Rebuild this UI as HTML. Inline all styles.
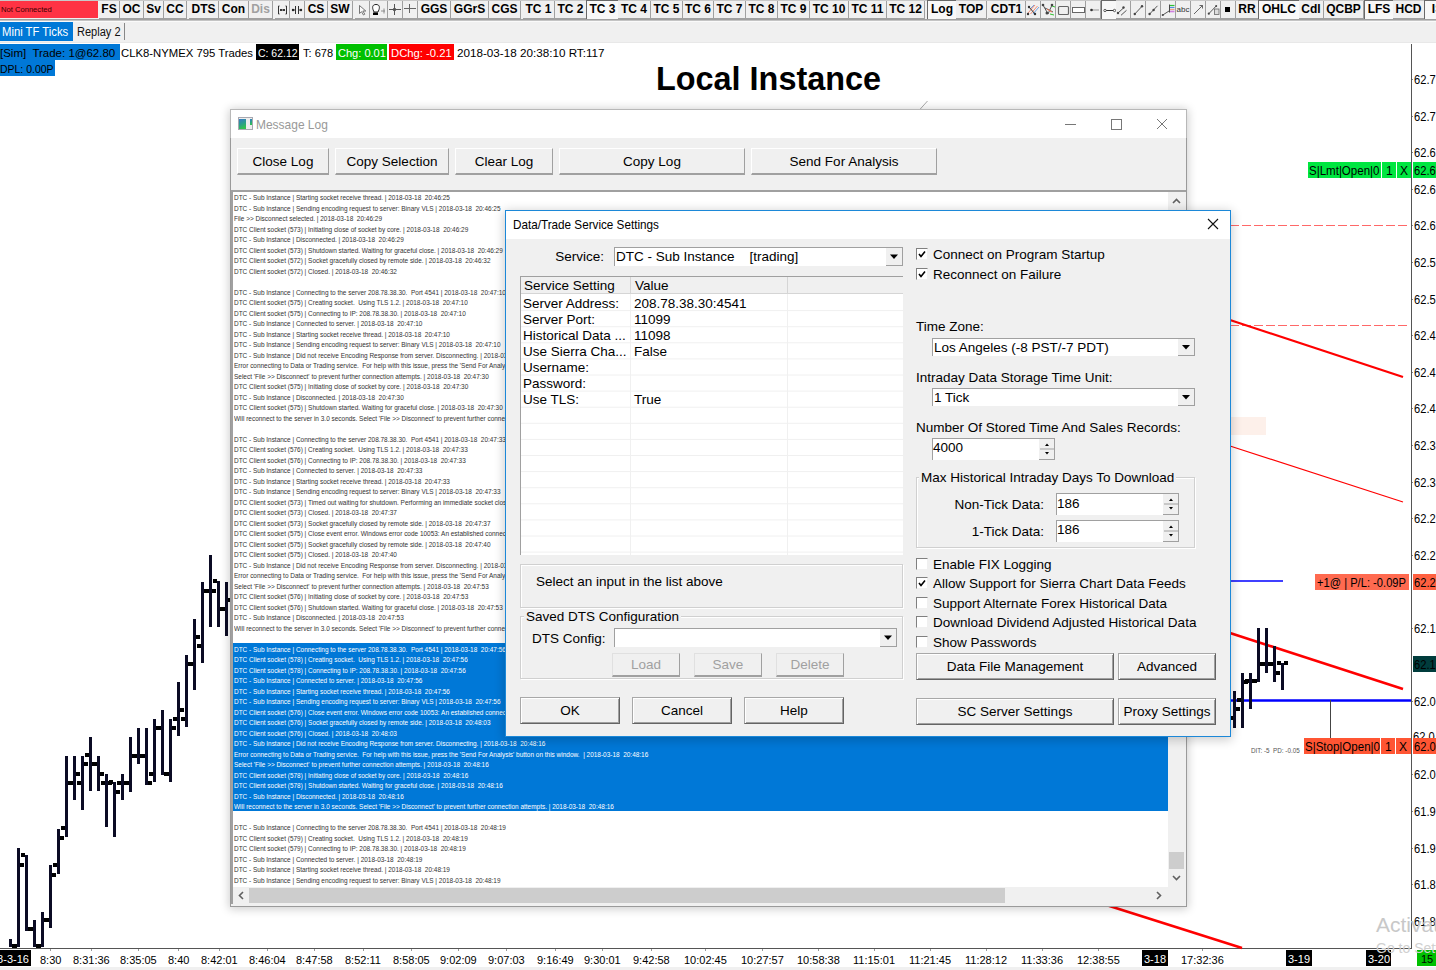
<!DOCTYPE html><html><head><meta charset="utf-8"><style>
*{box-sizing:border-box}
html,body{margin:0;padding:0;width:1436px;height:970px;overflow:hidden;background:#fff;font-family:'Liberation Sans', sans-serif;position:relative}
.a{position:absolute}
.t{position:absolute;white-space:nowrap;line-height:1}
.tb{position:absolute;top:1px;height:18px;background:#f0f0f0;border-right:1px solid #a0a0a0;border-bottom:1px solid #a0a0a0;font:bold 12px 'Liberation Sans', sans-serif;color:#000;text-align:center;line-height:17px;white-space:nowrap}
.tbp{background:#f8f8f8;border-right:none;border-bottom:none;border-left:1px solid #696969;border-top:1px solid #696969;top:0;height:19px}
.btn{position:absolute;background:#f0f0f0;border:1px solid #fff;border-right:1px solid #a0a0a0;border-bottom:2px solid #a0a0a0;font:13px 'Liberation Sans', sans-serif;color:#000;text-align:center;white-space:nowrap}
.log{position:absolute;left:234px;white-space:nowrap;font:7.5px 'Liberation Sans', sans-serif;color:#333;transform-origin:0 0;transform:scaleX(0.86);line-height:10.5px}
</style></head><body>

<div class="a" style="left:0;top:0;width:1436px;height:42px;background:#f0f0f0"></div>
<div class="a" style="left:0;top:19px;width:1436px;height:1px;background:#a0a0a0"></div>
<div class="a" style="left:0;top:20px;width:1436px;height:1px;background:#c4c4c4"></div>
<div class="a" style="left:0;top:21px;width:1436px;height:1px;background:#fafafa"></div>
<div class="a" style="left:0;top:0;width:1436px;height:1px;background:#c8c8c8"></div>
<div class="a" style="left:0;top:1px;width:98px;height:17px;background:#ff3344"></div>
<div class="t" style="left:1px;top:5px;font:8px 'Liberation Sans', sans-serif;color:#3a0000;transform:scaleX(0.95);transform-origin:0 0">Not Connected</div>
<div class="tb" style="left:99px;width:21px">FS</div>
<div class="tb" style="left:120px;width:24px">OC</div>
<div class="tb" style="left:144px;width:20px">Sv</div>
<div class="tb" style="left:164px;width:23px">CC</div>
<div class="tb" style="left:189px;width:30px">DTS</div>
<div class="tb" style="left:219px;width:30px">Con</div>
<div class="tb" style="left:249px;width:24px;color:#a0a0a0">Dis</div>
<div class="tb" style="left:275px;width:15px"><svg width="15" height="17" viewBox="0 0 15 17" style="position:absolute;left:0;top:0"><path d="M3.5 5v8M3.5 5h1M3.5 13h1M11.5 5v8M11.5 5h-1M11.5 13h-1M5 9h5" stroke="#333" stroke-width="1" fill="none"/><circle cx="6" cy="9" r="1.1" fill="#222"/><circle cx="9" cy="9" r="1.1" fill="#222"/></svg></div>
<div class="tb" style="left:290px;width:15px"><svg width="15" height="17" viewBox="0 0 15 17" style="position:absolute;left:0;top:0"><path d="M5.5 5v8M8.5 5v8M4 9h1M9 9h1" stroke="#333" stroke-width="1"/><circle cx="3" cy="9" r="1.2" fill="#222"/><circle cx="11" cy="9" r="1.2" fill="#222"/></svg></div>
<div class="tb" style="left:305px;width:23px">CS</div>
<div class="tb" style="left:328px;width:25px">SW</div>
<div class="tb" style="left:355px;width:15px"><svg width="15" height="17" viewBox="0 0 15 17" style="position:absolute;left:0;top:0"><path d="M4.5 4.5v8l2-1.8 2 3.3 1.3-0.8-2-3.2h3z" fill="#fafafa" stroke="#555" stroke-width="0.8" stroke-linejoin="round"/></svg></div>
<div class="tb" style="left:370px;width:18px"><svg width="15" height="17" viewBox="0 0 15 17" style="position:absolute;left:0;top:0"><path d="M3 8.5c-1-3 0-5 3-5s4 2 3 5l-1 2.5h-4z" fill="#fff" stroke="#222" stroke-width="1"/><rect x="3" y="11.5" width="5" height="2.5" fill="#000"/><path d="M11 10h6M14 7.5v5" stroke="#777" stroke-width="0.8"/></svg></div>
<div class="tb" style="left:388px;width:15px"><svg width="15" height="17" viewBox="0 0 15 17" style="position:absolute;left:0;top:0"><path d="M1 8.5H13M6.5 3V14" stroke="#555" stroke-width="1"/><circle cx="6.5" cy="8.5" r="1.7" fill="#555"/></svg></div>
<div class="tb" style="left:403px;width:15px"><svg width="15" height="17" viewBox="0 0 15 17" style="position:absolute;left:0;top:0"><path d="M1 7.5H13M6.5 3V12" stroke="#666" stroke-width="1"/></svg></div>
<div class="tb" style="left:418px;width:33px">GGS</div>
<div class="tb" style="left:451px;width:38px">GGrS</div>
<div class="tb" style="left:489px;width:32px">CGS</div>
<div class="tb" style="left:523px;width:32px">TC 1</div>
<div class="tb" style="left:555px;width:32px">TC 2</div>
<div class="tb tbp" style="left:586px;width:32px;line-height:17px">TC 3</div>
<div class="tb" style="left:618px;width:33px">TC 4</div>
<div class="tb" style="left:651px;width:32px">TC 5</div>
<div class="tb" style="left:683px;width:31px">TC 6</div>
<div class="tb" style="left:714px;width:32px">TC 7</div>
<div class="tb" style="left:746px;width:32px">TC 8</div>
<div class="tb" style="left:778px;width:32px">TC 9</div>
<div class="tb" style="left:810px;width:39px">TC 10</div>
<div class="tb" style="left:849px;width:38px">TC 11</div>
<div class="tb" style="left:887px;width:38px">TC 12</div>
<div class="tb tbp" style="left:927px;width:29px;line-height:17px">Log</div>
<div class="tb" style="left:956px;width:31px">TOP</div>
<div class="tb" style="left:988px;width:38px">CDT1</div>
<div class="tb" style="left:1026px;width:15px"><svg width="15" height="17" viewBox="0 0 15 17" style="position:absolute;left:0;top:0"><path d="M4.5 13l7-8M2 12l7-8" stroke="#f07050" stroke-width="0.8"/><path d="M7 13l6-7M5 7l3-3" stroke="#5090e0" stroke-width="0.8"/><path d="M3 6l6 7" stroke="#333" stroke-width="1"/><circle cx="3" cy="6" r="1.2" fill="#333"/><circle cx="9" cy="13" r="1.2" fill="#333"/><circle cx="2" cy="13" r="1.2" fill="#333"/></svg></div>
<div class="tb" style="left:1041px;width:15px"><svg width="15" height="17" viewBox="0 0 15 17" style="position:absolute;left:0;top:0"><path d="M2 4l5 9M11 4l-4 9M4 7l8 4" stroke="#444" stroke-width="0.9"/><path d="M6 8l5 3" stroke="#f07050"/><path d="M9 13l4 1M11 5l3 1" stroke="#30c030"/><circle cx="2" cy="4" r="1.3" fill="#444"/><circle cx="11" cy="4" r="1.3" fill="#444"/><circle cx="6" cy="12" r="1.5" fill="#444"/></svg></div>
<div class="tb" style="left:1056px;width:15px"><svg width="15" height="17" viewBox="0 0 15 17" style="position:absolute;left:0;top:0"><rect x="2.5" y="5.5" width="10" height="8" rx="1" fill="none" stroke="#666" stroke-width="1.2"/></svg></div>
<div class="tb" style="left:1071px;width:15px"><svg width="15" height="17" viewBox="0 0 15 17" style="position:absolute;left:0;top:0"><rect x="1.5" y="6.5" width="12" height="5" fill="#fff" stroke="#666" stroke-width="1"/></svg></div>
<div class="tb" style="left:1086px;width:15px"><svg width="15" height="17" viewBox="0 0 15 17" style="position:absolute;left:0;top:0"><path d="M6 9h7" stroke="#aaa" stroke-width="1.3"/><circle cx="5.5" cy="9" r="1.3" fill="#333"/></svg></div>
<div class="tb tbp" style="left:1101px;width:15px"><svg width="15" height="17" viewBox="0 0 15 17" style="position:absolute;left:0;top:0"><path d="M3 9.5h9.5" stroke="#333" stroke-width="1"/><circle cx="3" cy="9.5" r="1.2" fill="#fff" stroke="#333" stroke-width="0.8"/><circle cx="12.5" cy="9.5" r="1.2" fill="#fff" stroke="#333" stroke-width="0.8"/></svg></div>
<div class="tb" style="left:1116px;width:15px"><svg width="15" height="17" viewBox="0 0 15 17" style="position:absolute;left:0;top:0"><path d="M2 12l6-5.5M5 14.3l5.5-5" stroke="#444" stroke-width="0.9"/><circle cx="2" cy="12" r="1.2" fill="#444"/><circle cx="7.5" cy="6.5" r="1.2" fill="#444"/></svg></div>
<div class="tb" style="left:1131px;width:15px"><svg width="15" height="17" viewBox="0 0 15 17" style="position:absolute;left:0;top:0"><path d="M3.8 13L11 5.3" stroke="#444" stroke-width="0.9"/><circle cx="3.8" cy="13" r="1.2" fill="#444"/><circle cx="11" cy="5.3" r="1.2" fill="#444"/></svg></div>
<div class="tb" style="left:1146px;width:15px"><svg width="15" height="17" viewBox="0 0 15 17" style="position:absolute;left:0;top:0"><path d="M3.6 13L11.5 4.8" stroke="#444" stroke-width="0.9"/><circle cx="3.6" cy="13" r="1.2" fill="#444"/><circle cx="7.6" cy="9" r="1.2" fill="#444"/></svg></div>
<div class="tb" style="left:1161px;width:15px"><svg width="15" height="17" viewBox="0 0 15 17" style="position:absolute;left:0;top:0"><path d="M1.8 14L8 10" stroke="#444" stroke-width="0.9"/><circle cx="1.8" cy="14" r="1.1" fill="#444"/><path d="M9 4.5h4.5" stroke="#30c030" stroke-width="1.2"/><path d="M9 6.5h4.5" stroke="#5090e0" stroke-width="1.2"/><path d="M9 8.5h4.5" stroke="#f0a080" stroke-width="1.2"/><path d="M9 10.5h4.5" stroke="#d080e0" stroke-width="1.6"/><path d="M8.5 3.5v8" stroke="#333" stroke-width="0.9"/></svg></div>
<div class="tb" style="left:1176px;width:15px;font:8px 'Liberation Sans', sans-serif;color:#333;line-height:17px">abc</div>
<div class="tb" style="left:1191px;width:15px"><svg width="15" height="17" viewBox="0 0 15 17" style="position:absolute;left:0;top:0"><path d="M3 13l8.5-8.5M8.5 4.5h3v3" stroke="#555" stroke-width="0.9" fill="none"/></svg></div>
<div class="tb" style="left:1206px;width:15px"><svg width="15" height="17" viewBox="0 0 15 17" style="position:absolute;left:0;top:0"><path d="M2.8 12.7L10.2 5" stroke="#444" stroke-width="0.9"/><circle cx="2.8" cy="12.7" r="1.1" fill="#444"/><circle cx="10.2" cy="5" r="1" fill="#444"/><rect x="8.5" y="8" width="4.5" height="5.5" fill="#ddd" stroke="#666" stroke-width="0.8"/></svg></div>
<div class="tb" style="left:1221px;width:15px"><div class="a" style="left:4px;top:6px;width:5px;height:5px;background:#000"></div></div>
<div class="tb" style="left:1236px;width:23px">RR</div>
<div class="tb tbp" style="left:1258px;width:41px;line-height:17px">OHLC</div>
<div class="tb" style="left:1299px;width:25px">Cdl</div>
<div class="tb" style="left:1324px;width:40px">QCBP</div>
<div class="tb tbp" style="left:1364px;width:29px;line-height:17px">LFS</div>
<div class="tb" style="left:1393px;width:32px">HCD</div>
<div class="tb tbp" style="left:1424px;width:26px;line-height:17px">IS</div>
<div class="a" style="left:0;top:22px;width:73px;height:19px;background:#0078d7"></div>
<div class="t" style="left:1.5px;top:25px;font:12px 'Liberation Sans', sans-serif;color:#fff;transform:scaleX(0.94);transform-origin:0 0">Mini TF Ticks</div>
<div class="t" style="left:77px;top:25px;font:12px 'Liberation Sans', sans-serif;color:#111;transform:scaleX(0.92);transform-origin:0 0">Replay 2</div>
<div class="a" style="left:124px;top:23px;width:1px;height:17px;background:#888"></div>
<div class="a" style="left:0;top:42px;width:1436px;height:1px;background:#e8e8e8"></div>
<div class="a" style="left:0;top:44px;width:120px;height:16px;background:#0078d7"></div>
<div class="a" style="left:256px;top:44px;width:43px;height:16px;background:#000"></div>
<div class="a" style="left:336px;top:44px;width:51px;height:16px;background:#00c000"></div>
<div class="a" style="left:389px;top:44px;width:65px;height:16px;background:#ff0000"></div>
<div class="a" style="left:0;top:60px;width:55px;height:16px;background:#0078d7"></div>
<div class="t" style="left:0px;top:47px;font:11.5px 'Liberation Sans', sans-serif;color:#000;transform:scaleX(1.0);transform-origin:0 0;white-space:pre">[Sim]  Trade: 1@62.80</div>
<div class="t" style="left:120.5px;top:47px;font:11.5px 'Liberation Sans', sans-serif;color:#000;transform:scaleX(0.983);transform-origin:0 0;white-space:pre">CLK8-NYMEX 795 Trades</div>
<div class="t" style="left:257.5px;top:47px;font:11.5px 'Liberation Sans', sans-serif;color:#fff;transform:scaleX(0.91);transform-origin:0 0;white-space:pre">C: 62.12</div>
<div class="t" style="left:302.8px;top:47px;font:11.5px 'Liberation Sans', sans-serif;color:#000;transform:scaleX(0.96);transform-origin:0 0;white-space:pre">T: 678</div>
<div class="t" style="left:338px;top:47px;font:11.5px 'Liberation Sans', sans-serif;color:#fff;transform:scaleX(0.96);transform-origin:0 0;white-space:pre">Chg: 0.01</div>
<div class="t" style="left:391px;top:47px;font:11.5px 'Liberation Sans', sans-serif;color:#fff;transform:scaleX(0.98);transform-origin:0 0;white-space:pre">DChg: -0.21</div>
<div class="t" style="left:457px;top:47px;font:11.5px 'Liberation Sans', sans-serif;color:#000;transform:scaleX(1.015);transform-origin:0 0;white-space:pre">2018-03-18 20:38:10 RT:117</div>
<div class="t" style="left:0;top:62.5px;font:11.5px 'Liberation Sans', sans-serif;color:#000;transform:scaleX(0.91);transform-origin:0 0;white-space:pre">DPL: 0.00P</div>
<div class="t" style="left:656px;top:61px;font:bold 32.4px 'Liberation Sans', sans-serif;color:#000">Local Instance</div>
<div class="a" style="left:1411px;top:44px;width:1px;height:905px;background:#555"></div>
<div class="t" style="left:1414px;top:73px;font:12px 'Liberation Sans', sans-serif;color:#000;transform:scaleX(0.93);transform-origin:0 0">62.7</div>
<div class="a" style="left:1412px;top:79px;width:1px;height:1px;background:#888"></div>
<div class="t" style="left:1414px;top:110px;font:12px 'Liberation Sans', sans-serif;color:#000;transform:scaleX(0.93);transform-origin:0 0">62.7</div>
<div class="a" style="left:1412px;top:116px;width:1px;height:1px;background:#888"></div>
<div class="t" style="left:1414px;top:146px;font:12px 'Liberation Sans', sans-serif;color:#000;transform:scaleX(0.93);transform-origin:0 0">62.6</div>
<div class="a" style="left:1412px;top:152px;width:1px;height:1px;background:#888"></div>
<div class="t" style="left:1414px;top:183px;font:12px 'Liberation Sans', sans-serif;color:#000;transform:scaleX(0.93);transform-origin:0 0">62.6</div>
<div class="a" style="left:1412px;top:189px;width:1px;height:1px;background:#888"></div>
<div class="t" style="left:1414px;top:219px;font:12px 'Liberation Sans', sans-serif;color:#000;transform:scaleX(0.93);transform-origin:0 0">62.6</div>
<div class="a" style="left:1412px;top:225px;width:1px;height:1px;background:#888"></div>
<div class="t" style="left:1414px;top:256px;font:12px 'Liberation Sans', sans-serif;color:#000;transform:scaleX(0.93);transform-origin:0 0">62.5</div>
<div class="a" style="left:1412px;top:262px;width:1px;height:1px;background:#888"></div>
<div class="t" style="left:1414px;top:293px;font:12px 'Liberation Sans', sans-serif;color:#000;transform:scaleX(0.93);transform-origin:0 0">62.5</div>
<div class="a" style="left:1412px;top:299px;width:1px;height:1px;background:#888"></div>
<div class="t" style="left:1414px;top:329px;font:12px 'Liberation Sans', sans-serif;color:#000;transform:scaleX(0.93);transform-origin:0 0">62.4</div>
<div class="a" style="left:1412px;top:335px;width:1px;height:1px;background:#888"></div>
<div class="t" style="left:1414px;top:366px;font:12px 'Liberation Sans', sans-serif;color:#000;transform:scaleX(0.93);transform-origin:0 0">62.4</div>
<div class="a" style="left:1412px;top:372px;width:1px;height:1px;background:#888"></div>
<div class="t" style="left:1414px;top:402px;font:12px 'Liberation Sans', sans-serif;color:#000;transform:scaleX(0.93);transform-origin:0 0">62.4</div>
<div class="a" style="left:1412px;top:408px;width:1px;height:1px;background:#888"></div>
<div class="t" style="left:1414px;top:439px;font:12px 'Liberation Sans', sans-serif;color:#000;transform:scaleX(0.93);transform-origin:0 0">62.3</div>
<div class="a" style="left:1412px;top:445px;width:1px;height:1px;background:#888"></div>
<div class="t" style="left:1414px;top:476px;font:12px 'Liberation Sans', sans-serif;color:#000;transform:scaleX(0.93);transform-origin:0 0">62.3</div>
<div class="a" style="left:1412px;top:482px;width:1px;height:1px;background:#888"></div>
<div class="t" style="left:1414px;top:512px;font:12px 'Liberation Sans', sans-serif;color:#000;transform:scaleX(0.93);transform-origin:0 0">62.2</div>
<div class="a" style="left:1412px;top:518px;width:1px;height:1px;background:#888"></div>
<div class="t" style="left:1414px;top:549px;font:12px 'Liberation Sans', sans-serif;color:#000;transform:scaleX(0.93);transform-origin:0 0">62.2</div>
<div class="a" style="left:1412px;top:555px;width:1px;height:1px;background:#888"></div>
<div class="t" style="left:1414px;top:622px;font:12px 'Liberation Sans', sans-serif;color:#000;transform:scaleX(0.93);transform-origin:0 0">62.1</div>
<div class="a" style="left:1412px;top:628px;width:1px;height:1px;background:#888"></div>
<div class="t" style="left:1414px;top:695px;font:12px 'Liberation Sans', sans-serif;color:#000;transform:scaleX(0.93);transform-origin:0 0">62.0</div>
<div class="a" style="left:1412px;top:701px;width:1px;height:1px;background:#888"></div>
<div class="t" style="left:1414px;top:768px;font:12px 'Liberation Sans', sans-serif;color:#000;transform:scaleX(0.93);transform-origin:0 0">62.0</div>
<div class="a" style="left:1412px;top:774px;width:1px;height:1px;background:#888"></div>
<div class="t" style="left:1414px;top:805px;font:12px 'Liberation Sans', sans-serif;color:#000;transform:scaleX(0.93);transform-origin:0 0">61.9</div>
<div class="a" style="left:1412px;top:811px;width:1px;height:1px;background:#888"></div>
<div class="t" style="left:1414px;top:842px;font:12px 'Liberation Sans', sans-serif;color:#000;transform:scaleX(0.93);transform-origin:0 0">61.9</div>
<div class="a" style="left:1412px;top:848px;width:1px;height:1px;background:#888"></div>
<div class="t" style="left:1414px;top:878px;font:12px 'Liberation Sans', sans-serif;color:#000;transform:scaleX(0.93);transform-origin:0 0">61.8</div>
<div class="a" style="left:1412px;top:884px;width:1px;height:1px;background:#888"></div>
<div class="t" style="left:1414px;top:915px;font:12px 'Liberation Sans', sans-serif;color:#000;transform:scaleX(0.93);transform-origin:0 0">61.8</div>
<div class="a" style="left:1412px;top:921px;width:1px;height:1px;background:#888"></div>
<div class="t" style="left:1413px;top:730px;font:12px 'Liberation Sans', sans-serif;color:#000;transform:scaleX(0.93);transform-origin:0 0">62.0</div>
<div class="a" style="left:1413px;top:162px;width:30px;height:16px;background:#00e640;overflow:hidden"><div class="t" style="left:1px;top:2px;font:12px 'Liberation Sans', sans-serif;color:#000;transform:scaleX(0.93);transform-origin:0 0;">62.6</div></div>
<div class="a" style="left:1413px;top:574px;width:30px;height:16px;background:#ff6040;overflow:hidden"><div class="t" style="left:1px;top:2px;font:12px 'Liberation Sans', sans-serif;color:#000;transform:scaleX(0.93);transform-origin:0 0;">62.2</div></div>
<div class="a" style="left:1413px;top:656px;width:30px;height:16px;background:#003c3c;overflow:hidden"><div class="t" style="left:1px;top:2px;font:12px 'Liberation Sans', sans-serif;color:#000;transform:scaleX(0.93);transform-origin:0 0;">62.1</div></div>
<div class="a" style="left:1413px;top:738px;width:30px;height:16px;background:#ff5533;overflow:hidden"><div class="t" style="left:1px;top:2px;font:12px 'Liberation Sans', sans-serif;color:#000;transform:scaleX(0.93);transform-origin:0 0;">62.0</div></div>
<div class="a" style="left:0;top:948px;width:1412px;height:1px;background:#555"></div>
<div class="a" style="left:0;top:967px;width:1436px;height:3px;background:#f0f0f0"></div>
<div class="t" style="left:40px;top:954px;font:11px 'Liberation Sans', sans-serif;color:#000">8:30</div>
<div class="a" style="left:50px;top:949px;width:1px;height:2px;background:#999"></div>
<div class="t" style="left:73px;top:954px;font:11px 'Liberation Sans', sans-serif;color:#000">8:31:36</div>
<div class="a" style="left:91px;top:949px;width:1px;height:2px;background:#999"></div>
<div class="t" style="left:120px;top:954px;font:11px 'Liberation Sans', sans-serif;color:#000">8:35:05</div>
<div class="a" style="left:138px;top:949px;width:1px;height:2px;background:#999"></div>
<div class="t" style="left:168px;top:954px;font:11px 'Liberation Sans', sans-serif;color:#000">8:40</div>
<div class="a" style="left:178px;top:949px;width:1px;height:2px;background:#999"></div>
<div class="t" style="left:201px;top:954px;font:11px 'Liberation Sans', sans-serif;color:#000">8:42:01</div>
<div class="a" style="left:219px;top:949px;width:1px;height:2px;background:#999"></div>
<div class="t" style="left:249px;top:954px;font:11px 'Liberation Sans', sans-serif;color:#000">8:46:04</div>
<div class="a" style="left:267px;top:949px;width:1px;height:2px;background:#999"></div>
<div class="t" style="left:296px;top:954px;font:11px 'Liberation Sans', sans-serif;color:#000">8:47:58</div>
<div class="a" style="left:314px;top:949px;width:1px;height:2px;background:#999"></div>
<div class="t" style="left:345px;top:954px;font:11px 'Liberation Sans', sans-serif;color:#000">8:52:11</div>
<div class="a" style="left:363px;top:949px;width:1px;height:2px;background:#999"></div>
<div class="t" style="left:393px;top:954px;font:11px 'Liberation Sans', sans-serif;color:#000">8:58:05</div>
<div class="a" style="left:411px;top:949px;width:1px;height:2px;background:#999"></div>
<div class="t" style="left:440px;top:954px;font:11px 'Liberation Sans', sans-serif;color:#000">9:02:09</div>
<div class="a" style="left:458px;top:949px;width:1px;height:2px;background:#999"></div>
<div class="t" style="left:488px;top:954px;font:11px 'Liberation Sans', sans-serif;color:#000">9:07:03</div>
<div class="a" style="left:506px;top:949px;width:1px;height:2px;background:#999"></div>
<div class="t" style="left:537px;top:954px;font:11px 'Liberation Sans', sans-serif;color:#000">9:16:49</div>
<div class="a" style="left:555px;top:949px;width:1px;height:2px;background:#999"></div>
<div class="t" style="left:584px;top:954px;font:11px 'Liberation Sans', sans-serif;color:#000">9:30:01</div>
<div class="a" style="left:602px;top:949px;width:1px;height:2px;background:#999"></div>
<div class="t" style="left:633px;top:954px;font:11px 'Liberation Sans', sans-serif;color:#000">9:42:58</div>
<div class="a" style="left:651px;top:949px;width:1px;height:2px;background:#999"></div>
<div class="t" style="left:684px;top:954px;font:11px 'Liberation Sans', sans-serif;color:#000">10:02:45</div>
<div class="a" style="left:705px;top:949px;width:1px;height:2px;background:#999"></div>
<div class="t" style="left:741px;top:954px;font:11px 'Liberation Sans', sans-serif;color:#000">10:27:57</div>
<div class="a" style="left:762px;top:949px;width:1px;height:2px;background:#999"></div>
<div class="t" style="left:797px;top:954px;font:11px 'Liberation Sans', sans-serif;color:#000">10:58:38</div>
<div class="a" style="left:818px;top:949px;width:1px;height:2px;background:#999"></div>
<div class="t" style="left:853px;top:954px;font:11px 'Liberation Sans', sans-serif;color:#000">11:15:01</div>
<div class="a" style="left:874px;top:949px;width:1px;height:2px;background:#999"></div>
<div class="t" style="left:909px;top:954px;font:11px 'Liberation Sans', sans-serif;color:#000">11:21:45</div>
<div class="a" style="left:930px;top:949px;width:1px;height:2px;background:#999"></div>
<div class="t" style="left:965px;top:954px;font:11px 'Liberation Sans', sans-serif;color:#000">11:28:12</div>
<div class="a" style="left:986px;top:949px;width:1px;height:2px;background:#999"></div>
<div class="t" style="left:1021px;top:954px;font:11px 'Liberation Sans', sans-serif;color:#000">11:33:36</div>
<div class="a" style="left:1042px;top:949px;width:1px;height:2px;background:#999"></div>
<div class="t" style="left:1077px;top:954px;font:11px 'Liberation Sans', sans-serif;color:#000">12:38:55</div>
<div class="a" style="left:1098px;top:949px;width:1px;height:2px;background:#999"></div>
<div class="t" style="left:1181px;top:954px;font:11px 'Liberation Sans', sans-serif;color:#000">17:32:36</div>
<div class="a" style="left:1202px;top:949px;width:1px;height:2px;background:#999"></div>
<div class="a" style="left:0px;top:950px;width:31px;height:16px;background:#000;overflow:hidden"><div class="t" style="left:-9px;top:3px;font:11px 'Liberation Sans', sans-serif;color:#fff;">18-3-16</div></div>
<div class="a" style="left:1142px;top:950px;width:26px;height:16px;background:#000;overflow:hidden"><div class="t" style="left:2px;top:3px;font:11px 'Liberation Sans', sans-serif;color:#fff;">3-18</div></div>
<div class="a" style="left:1286px;top:950px;width:26px;height:16px;background:#000;overflow:hidden"><div class="t" style="left:2px;top:3px;font:11px 'Liberation Sans', sans-serif;color:#fff;">3-19</div></div>
<div class="a" style="left:1366px;top:950px;width:25px;height:16px;background:#000;overflow:hidden"><div class="t" style="left:2px;top:3px;font:11px 'Liberation Sans', sans-serif;color:#fff;">3-20</div></div>
<div class="a" style="left:1417px;top:950px;width:19px;height:16px;background:#00c000;overflow:hidden"><div class="t" style="left:4px;top:3px;font:11px 'Liberation Sans', sans-serif;color:#000;">15</div></div>
<svg class="a" style="left:0;top:0" width="1436" height="970" viewBox="0 0 1436 970" shape-rendering="auto">
<path d="M1230 225.5H1408M1230 325.5H1408" stroke="#ff6868" stroke-width="1" stroke-dasharray="9,3" shape-rendering="crispEdges"/>
<rect x="1230" y="417" width="36" height="18" fill="#fdf0ea"/>
<path d="M1230 320L1403 377" stroke="#f00" stroke-width="2.2"/>
<path d="M1230 446L1403 502" stroke="#f00" stroke-width="1.2"/>
<path d="M1230 633L1403 689" stroke="#f00" stroke-width="2.6"/>
<path d="M1100 903L1242 948" stroke="#f00" stroke-width="2.6"/>
<path d="M1230 581H1283" stroke="#00f" stroke-width="1.5"/>
<path d="M1230 700.5H1411" stroke="#00f" stroke-width="2.5"/>
<path d="M1330.5 700V740" stroke="#444" stroke-width="1"/>
<path d="M918.5 111L927.5 101" stroke="#aaa" stroke-width="1"/>
<rect x="9" y="939" width="3" height="8" fill="#0b0b24"/>
<rect x="12" y="944" width="4" height="4" fill="#000"/>
<rect x="17" y="848" width="3" height="99" fill="#0b0b24"/>
<rect x="13" y="944" width="4" height="4" fill="#000"/>
<rect x="20" y="863" width="4" height="4" fill="#000"/>
<rect x="25" y="855" width="3" height="76" fill="#0b0b24"/>
<rect x="21" y="853" width="4" height="4" fill="#000"/>
<rect x="28" y="927" width="4" height="4" fill="#000"/>
<rect x="33" y="920" width="3" height="27" fill="#0b0b24"/>
<rect x="29" y="927" width="4" height="4" fill="#000"/>
<rect x="36" y="944" width="4" height="4" fill="#000"/>
<rect x="41" y="912" width="3" height="35" fill="#0b0b24"/>
<rect x="37" y="944" width="4" height="4" fill="#000"/>
<rect x="44" y="918" width="4" height="4" fill="#000"/>
<rect x="49" y="865" width="3" height="63" fill="#0b0b24"/>
<rect x="45" y="918" width="4" height="4" fill="#000"/>
<rect x="52" y="873" width="4" height="4" fill="#000"/>
<rect x="57" y="829" width="3" height="45" fill="#0b0b24"/>
<rect x="53" y="863" width="4" height="4" fill="#000"/>
<rect x="60" y="836" width="4" height="4" fill="#000"/>
<rect x="65" y="756" width="3" height="81" fill="#0b0b24"/>
<rect x="61" y="826" width="4" height="4" fill="#000"/>
<rect x="68" y="781" width="4" height="4" fill="#000"/>
<rect x="73" y="756" width="3" height="44" fill="#0b0b24"/>
<rect x="69" y="781" width="4" height="4" fill="#000"/>
<rect x="76" y="772" width="4" height="4" fill="#000"/>
<rect x="81" y="756" width="3" height="54" fill="#0b0b24"/>
<rect x="77" y="781" width="4" height="4" fill="#000"/>
<rect x="84" y="762" width="4" height="4" fill="#000"/>
<rect x="89" y="737" width="3" height="54" fill="#0b0b24"/>
<rect x="85" y="753" width="4" height="4" fill="#000"/>
<rect x="92" y="762" width="4" height="4" fill="#000"/>
<rect x="97" y="756" width="3" height="35" fill="#0b0b24"/>
<rect x="93" y="762" width="4" height="4" fill="#000"/>
<rect x="100" y="772" width="4" height="4" fill="#000"/>
<rect x="105" y="774" width="3" height="53" fill="#0b0b24"/>
<rect x="101" y="781" width="4" height="4" fill="#000"/>
<rect x="108" y="781" width="4" height="4" fill="#000"/>
<rect x="113" y="782" width="3" height="55" fill="#0b0b24"/>
<rect x="109" y="780" width="4" height="4" fill="#000"/>
<rect x="116" y="790" width="4" height="4" fill="#000"/>
<rect x="121" y="774" width="3" height="26" fill="#0b0b24"/>
<rect x="117" y="781" width="4" height="4" fill="#000"/>
<rect x="124" y="781" width="4" height="4" fill="#000"/>
<rect x="129" y="737" width="3" height="55" fill="#0b0b24"/>
<rect x="125" y="781" width="4" height="4" fill="#000"/>
<rect x="132" y="754" width="4" height="4" fill="#000"/>
<rect x="137" y="728" width="3" height="36" fill="#0b0b24"/>
<rect x="133" y="754" width="4" height="4" fill="#000"/>
<rect x="140" y="754" width="4" height="4" fill="#000"/>
<rect x="145" y="728" width="3" height="57" fill="#0b0b24"/>
<rect x="141" y="754" width="4" height="4" fill="#000"/>
<rect x="148" y="781" width="4" height="4" fill="#000"/>
<rect x="153" y="719" width="3" height="63" fill="#0b0b24"/>
<rect x="149" y="772" width="4" height="4" fill="#000"/>
<rect x="156" y="726" width="4" height="4" fill="#000"/>
<rect x="161" y="710" width="3" height="65" fill="#0b0b24"/>
<rect x="157" y="726" width="4" height="4" fill="#000"/>
<rect x="164" y="772" width="4" height="4" fill="#000"/>
<rect x="169" y="719" width="3" height="63" fill="#0b0b24"/>
<rect x="165" y="772" width="4" height="4" fill="#000"/>
<rect x="172" y="726" width="4" height="4" fill="#000"/>
<rect x="177" y="682" width="3" height="54" fill="#0b0b24"/>
<rect x="173" y="717" width="4" height="4" fill="#000"/>
<rect x="180" y="708" width="4" height="4" fill="#000"/>
<rect x="185" y="655" width="3" height="72" fill="#0b0b24"/>
<rect x="181" y="717" width="4" height="4" fill="#000"/>
<rect x="188" y="662" width="4" height="4" fill="#000"/>
<rect x="193" y="619" width="3" height="71" fill="#0b0b24"/>
<rect x="189" y="662" width="4" height="4" fill="#000"/>
<rect x="196" y="635" width="4" height="4" fill="#000"/>
<rect x="201" y="582" width="3" height="81" fill="#0b0b24"/>
<rect x="197" y="644" width="4" height="4" fill="#000"/>
<rect x="204" y="589" width="4" height="4" fill="#000"/>
<rect x="209" y="555" width="3" height="72" fill="#0b0b24"/>
<rect x="205" y="589" width="4" height="4" fill="#000"/>
<rect x="212" y="589" width="4" height="4" fill="#000"/>
<rect x="217" y="581" width="3" height="46" fill="#0b0b24"/>
<rect x="213" y="579" width="4" height="4" fill="#000"/>
<rect x="220" y="607" width="4" height="4" fill="#000"/>
<rect x="225" y="582" width="3" height="54" fill="#0b0b24"/>
<rect x="221" y="607" width="4" height="4" fill="#000"/>
<rect x="228" y="598" width="4" height="4" fill="#000"/>
<rect x="1233" y="691" width="3" height="37" fill="#0b0b24"/>
<rect x="1229" y="716" width="4" height="4" fill="#000"/>
<rect x="1236" y="707" width="4" height="4" fill="#000"/>
<rect x="1241" y="673" width="3" height="55" fill="#0b0b24"/>
<rect x="1237" y="698" width="4" height="4" fill="#000"/>
<rect x="1244" y="680" width="4" height="4" fill="#000"/>
<rect x="1249" y="673" width="3" height="36" fill="#0b0b24"/>
<rect x="1245" y="679" width="4" height="4" fill="#000"/>
<rect x="1252" y="679" width="4" height="4" fill="#000"/>
<rect x="1257" y="628" width="3" height="54" fill="#0b0b24"/>
<rect x="1253" y="679" width="4" height="4" fill="#000"/>
<rect x="1260" y="662" width="4" height="4" fill="#000"/>
<rect x="1265" y="628" width="3" height="45" fill="#0b0b24"/>
<rect x="1261" y="662" width="4" height="4" fill="#000"/>
<rect x="1268" y="662" width="4" height="4" fill="#000"/>
<rect x="1273" y="646" width="3" height="36" fill="#0b0b24"/>
<rect x="1269" y="662" width="4" height="4" fill="#000"/>
<rect x="1276" y="671" width="4" height="4" fill="#000"/>
<rect x="1281" y="663" width="3" height="27" fill="#0b0b24"/>
<rect x="1277" y="661" width="4" height="4" fill="#000"/>
<rect x="1284" y="661" width="4" height="4" fill="#000"/>
</svg>
<div class="a" style="left:1308px;top:162px;width:73px;height:16px;background:#00e640;overflow:hidden"><div class="t" style="left:1px;top:2px;font:12px 'Liberation Sans', sans-serif;color:#000;transform:scaleX(0.96);transform-origin:0 0;">S|Lmt|Open|0</div></div>
<div class="a" style="left:1382px;top:162px;width:14px;height:16px;background:#00e640;overflow:hidden"><div class="t" style="left:4px;top:2px;font:12px 'Liberation Sans', sans-serif;color:#000;">1</div></div>
<div class="a" style="left:1397px;top:162px;width:14px;height:16px;background:#00e640;overflow:hidden"><div class="t" style="left:3px;top:2px;font:12px 'Liberation Sans', sans-serif;color:#000;">X</div></div>
<div class="a" style="left:1315px;top:574px;width:94px;height:16px;background:#ff6a50;overflow:hidden"><div class="t" style="left:2px;top:2px;font:12px 'Liberation Sans', sans-serif;color:#000;transform:scaleX(0.93);transform-origin:0 0;">+1@ | P/L: -0.09P</div></div>
<div class="a" style="left:1304px;top:738px;width:76px;height:16px;background:#ff5533;overflow:hidden"><div class="t" style="left:1px;top:2px;font:12px 'Liberation Sans', sans-serif;color:#000;transform:scaleX(0.96);transform-origin:0 0;">S|Stop|Open|0</div></div>
<div class="a" style="left:1381px;top:738px;width:14px;height:16px;background:#ff5533;overflow:hidden"><div class="t" style="left:4px;top:2px;font:12px 'Liberation Sans', sans-serif;color:#000;">1</div></div>
<div class="a" style="left:1396px;top:738px;width:15px;height:16px;background:#ff5533;overflow:hidden"><div class="t" style="left:3px;top:2px;font:12px 'Liberation Sans', sans-serif;color:#000;">X</div></div>
<div class="t" style="left:1251px;top:747px;font:7px 'Liberation Sans', sans-serif;color:#555;transform:scaleX(0.9);transform-origin:0 0">DIT: -5&nbsp; PD: -0.05</div>
<div class="t" style="left:1376px;top:913px;font:21px 'Liberation Sans', sans-serif;color:#c8c8c8">Activate</div>
<div class="t" style="left:1376px;top:940px;font:14px 'Liberation Sans', sans-serif;color:#d0d0d0">Go to Settings</div>
<div class="a" style="left:230px;top:109px;width:957px;height:798px;background:#f0f0f0;border:1px solid #b8b8b8;box-shadow:0 1px 9px 1px rgba(0,0,0,0.2)"></div>
<div class="a" style="left:231px;top:110px;width:955px;height:28px;background:#fff"></div>
<div class="a" style="left:230px;top:138px;width:1px;height:769px;background:#9a9a9a"></div>
<div class="a" style="left:1186px;top:138px;width:1px;height:769px;background:#9a9a9a"></div>
<div class="a" style="left:230px;top:906px;width:957px;height:1px;background:#9a9a9a"></div>
<svg class="a" style="left:238px;top:117px" width="15" height="13" viewBox="0 0 15 13"><defs><linearGradient id="ig" x1="0" y1="0" x2="0.3" y2="1"><stop offset="0" stop-color="#3a78c8"/><stop offset="0.5" stop-color="#2a9a90"/><stop offset="1" stop-color="#30c050"/></linearGradient></defs><rect x="0.5" y="0.5" width="14" height="12" fill="#eeeeee" stroke="#a8a8b0"/><rect x="1" y="2" width="7" height="10" fill="url(#ig)"/><rect x="12" y="2" width="2" height="6" fill="url(#ig)"/></svg>
<div class="t" style="left:256px;top:117px;font:13px 'Liberation Sans', sans-serif;color:#999;transform:scaleX(0.92);transform-origin:0 0">Message Log</div>
<svg class="a" style="left:1055px;top:114px" width="120" height="20" viewBox="0 0 120 20"><path d="M10 10.5H21" stroke="#777" stroke-width="1"/><rect x="56.5" y="5.5" width="10" height="10" fill="none" stroke="#777"/><path d="M102 5L112 15M112 5L102 15" stroke="#777" stroke-width="1"/></svg>
<div class="a" style="left:237px;top:148px;width:92px;height:27px;background:#f0f0f0;border-top:1px solid #fff;border-left:1px solid #fff;border-right:1px solid #a0a0a0;border-bottom:2px solid #a0a0a0"></div>
<div class="t" style="left:237px;top:154px;width:92px;text-align:center;font:13.5px 'Liberation Sans', sans-serif;color:#000">Close Log</div>
<div class="a" style="left:335px;top:148px;width:114px;height:27px;background:#f0f0f0;border-top:1px solid #fff;border-left:1px solid #fff;border-right:1px solid #a0a0a0;border-bottom:2px solid #a0a0a0"></div>
<div class="t" style="left:335px;top:154px;width:114px;text-align:center;font:13.5px 'Liberation Sans', sans-serif;color:#000">Copy Selection</div>
<div class="a" style="left:455px;top:148px;width:98px;height:27px;background:#f0f0f0;border-top:1px solid #fff;border-left:1px solid #fff;border-right:1px solid #a0a0a0;border-bottom:2px solid #a0a0a0"></div>
<div class="t" style="left:455px;top:154px;width:98px;text-align:center;font:13.5px 'Liberation Sans', sans-serif;color:#000">Clear Log</div>
<div class="a" style="left:559px;top:148px;width:186px;height:27px;background:#f0f0f0;border-top:1px solid #fff;border-left:1px solid #fff;border-right:1px solid #a0a0a0;border-bottom:2px solid #a0a0a0"></div>
<div class="t" style="left:559px;top:154px;width:186px;text-align:center;font:13.5px 'Liberation Sans', sans-serif;color:#000">Copy Log</div>
<div class="a" style="left:751px;top:148px;width:186px;height:27px;background:#f0f0f0;border-top:1px solid #fff;border-left:1px solid #fff;border-right:1px solid #a0a0a0;border-bottom:2px solid #a0a0a0"></div>
<div class="t" style="left:751px;top:154px;width:186px;text-align:center;font:13.5px 'Liberation Sans', sans-serif;color:#000">Send For Analysis</div>
<div class="a" style="left:231px;top:190px;width:955px;height:2px;background:#a0a0a0"></div>
<div class="a" style="left:231px;top:190px;width:2px;height:714px;background:#a0a0a0"></div>
<div class="a" style="left:233px;top:192px;width:935px;height:695px;background:#fff;overflow:hidden">
<div class="a" style="left:0;top:451.00px;width:935px;height:168.00px;background:#0078d7"></div>
<div class="t" style="left:1px;top:1.00px;font:7.5px 'Liberation Sans', sans-serif;color:#333;transform:scaleX(0.86);transform-origin:0 0">DTC - Sub Instance | Starting socket receive thread. | 2018-03-18&nbsp; 20:46:25</div>
<div class="t" style="left:1px;top:11.50px;font:7.5px 'Liberation Sans', sans-serif;color:#333;transform:scaleX(0.86);transform-origin:0 0">DTC - Sub Instance | Sending encoding request to server: Binary VLS | 2018-03-18&nbsp; 20:46:25</div>
<div class="t" style="left:1px;top:22.00px;font:7.5px 'Liberation Sans', sans-serif;color:#333;transform:scaleX(0.86);transform-origin:0 0">File &gt;&gt; Disconnect selected. | 2018-03-18&nbsp; 20:46:29</div>
<div class="t" style="left:1px;top:32.50px;font:7.5px 'Liberation Sans', sans-serif;color:#333;transform:scaleX(0.86);transform-origin:0 0">DTC Client socket (573) | Initiating close of socket by core. | 2018-03-18&nbsp; 20:46:29</div>
<div class="t" style="left:1px;top:43.00px;font:7.5px 'Liberation Sans', sans-serif;color:#333;transform:scaleX(0.86);transform-origin:0 0">DTC - Sub Instance | Disconnected. | 2018-03-18&nbsp; 20:46:29</div>
<div class="t" style="left:1px;top:53.50px;font:7.5px 'Liberation Sans', sans-serif;color:#333;transform:scaleX(0.86);transform-origin:0 0">DTC Client socket (573) | Shutdown started. Waiting for graceful close. | 2018-03-18&nbsp; 20:46:29</div>
<div class="t" style="left:1px;top:64.00px;font:7.5px 'Liberation Sans', sans-serif;color:#333;transform:scaleX(0.86);transform-origin:0 0">DTC Client socket (572) | Socket gracefully closed by remote side. | 2018-03-18&nbsp; 20:46:32</div>
<div class="t" style="left:1px;top:74.50px;font:7.5px 'Liberation Sans', sans-serif;color:#333;transform:scaleX(0.86);transform-origin:0 0">DTC Client socket (572) | Closed. | 2018-03-18&nbsp; 20:46:32</div>
<div class="t" style="left:1px;top:95.50px;font:7.5px 'Liberation Sans', sans-serif;color:#333;transform:scaleX(0.86);transform-origin:0 0">DTC - Sub Instance | Connecting to the server 208.78.38.30.&nbsp; Port 4541 | 2018-03-18&nbsp; 20:47:10</div>
<div class="t" style="left:1px;top:106.00px;font:7.5px 'Liberation Sans', sans-serif;color:#333;transform:scaleX(0.86);transform-origin:0 0">DTC Client socket (575) | Creating socket.&nbsp; Using TLS 1.2. | 2018-03-18&nbsp; 20:47:10</div>
<div class="t" style="left:1px;top:116.50px;font:7.5px 'Liberation Sans', sans-serif;color:#333;transform:scaleX(0.86);transform-origin:0 0">DTC Client socket (575) | Connecting to IP: 208.78.38.30. | 2018-03-18&nbsp; 20:47:10</div>
<div class="t" style="left:1px;top:127.00px;font:7.5px 'Liberation Sans', sans-serif;color:#333;transform:scaleX(0.86);transform-origin:0 0">DTC - Sub Instance | Connected to server. | 2018-03-18&nbsp; 20:47:10</div>
<div class="t" style="left:1px;top:137.50px;font:7.5px 'Liberation Sans', sans-serif;color:#333;transform:scaleX(0.86);transform-origin:0 0">DTC - Sub Instance | Starting socket receive thread. | 2018-03-18&nbsp; 20:47:10</div>
<div class="t" style="left:1px;top:148.00px;font:7.5px 'Liberation Sans', sans-serif;color:#333;transform:scaleX(0.86);transform-origin:0 0">DTC - Sub Instance | Sending encoding request to server: Binary VLS | 2018-03-18&nbsp; 20:47:10</div>
<div class="t" style="left:1px;top:158.50px;font:7.5px 'Liberation Sans', sans-serif;color:#333;transform:scaleX(0.86);transform-origin:0 0">DTC - Sub Instance | Did not receive Encoding Response from server. Disconnecting. | 2018-03-18&nbsp; 20:47:30</div>
<div class="t" style="left:1px;top:169.00px;font:7.5px 'Liberation Sans', sans-serif;color:#333;transform:scaleX(0.86);transform-origin:0 0">Error connecting to Data or Trading service.&nbsp; For help with this issue, press the &#x27;Send For Analysis&#x27; button on this window.&nbsp; | 2018-03-18&nbsp; 20:47:30</div>
<div class="t" style="left:1px;top:179.50px;font:7.5px 'Liberation Sans', sans-serif;color:#333;transform:scaleX(0.86);transform-origin:0 0">Select &#x27;File &gt;&gt; Disconnect&#x27; to prevent further connection attempts. | 2018-03-18&nbsp; 20:47:30</div>
<div class="t" style="left:1px;top:190.00px;font:7.5px 'Liberation Sans', sans-serif;color:#333;transform:scaleX(0.86);transform-origin:0 0">DTC Client socket (575) | Initiating close of socket by core. | 2018-03-18&nbsp; 20:47:30</div>
<div class="t" style="left:1px;top:200.50px;font:7.5px 'Liberation Sans', sans-serif;color:#333;transform:scaleX(0.86);transform-origin:0 0">DTC - Sub Instance | Disconnected. | 2018-03-18&nbsp; 20:47:30</div>
<div class="t" style="left:1px;top:211.00px;font:7.5px 'Liberation Sans', sans-serif;color:#333;transform:scaleX(0.86);transform-origin:0 0">DTC Client socket (575) | Shutdown started. Waiting for graceful close. | 2018-03-18&nbsp; 20:47:30</div>
<div class="t" style="left:1px;top:221.50px;font:7.5px 'Liberation Sans', sans-serif;color:#333;transform:scaleX(0.86);transform-origin:0 0">Will reconnect to the server in 3.0 seconds. Select &#x27;File &gt;&gt; Disconnect&#x27; to prevent further connection attempts. | 2018-03-18&nbsp; 20:47:30</div>
<div class="t" style="left:1px;top:242.50px;font:7.5px 'Liberation Sans', sans-serif;color:#333;transform:scaleX(0.86);transform-origin:0 0">DTC - Sub Instance | Connecting to the server 208.78.38.30.&nbsp; Port 4541 | 2018-03-18&nbsp; 20:47:33</div>
<div class="t" style="left:1px;top:253.00px;font:7.5px 'Liberation Sans', sans-serif;color:#333;transform:scaleX(0.86);transform-origin:0 0">DTC Client socket (576) | Creating socket.&nbsp; Using TLS 1.2. | 2018-03-18&nbsp; 20:47:33</div>
<div class="t" style="left:1px;top:263.50px;font:7.5px 'Liberation Sans', sans-serif;color:#333;transform:scaleX(0.86);transform-origin:0 0">DTC Client socket (576) | Connecting to IP: 208.78.38.30. | 2018-03-18&nbsp; 20:47:33</div>
<div class="t" style="left:1px;top:274.00px;font:7.5px 'Liberation Sans', sans-serif;color:#333;transform:scaleX(0.86);transform-origin:0 0">DTC - Sub Instance | Connected to server. | 2018-03-18&nbsp; 20:47:33</div>
<div class="t" style="left:1px;top:284.50px;font:7.5px 'Liberation Sans', sans-serif;color:#333;transform:scaleX(0.86);transform-origin:0 0">DTC - Sub Instance | Starting socket receive thread. | 2018-03-18&nbsp; 20:47:33</div>
<div class="t" style="left:1px;top:295.00px;font:7.5px 'Liberation Sans', sans-serif;color:#333;transform:scaleX(0.86);transform-origin:0 0">DTC - Sub Instance | Sending encoding request to server: Binary VLS | 2018-03-18&nbsp; 20:47:33</div>
<div class="t" style="left:1px;top:305.50px;font:7.5px 'Liberation Sans', sans-serif;color:#333;transform:scaleX(0.86);transform-origin:0 0">DTC Client socket (573) | Timed out waiting for shutdown. Performing an immediate socket close. | 2018-03-18&nbsp; 20:47:37</div>
<div class="t" style="left:1px;top:316.00px;font:7.5px 'Liberation Sans', sans-serif;color:#333;transform:scaleX(0.86);transform-origin:0 0">DTC Client socket (573) | Closed. | 2018-03-18&nbsp; 20:47:37</div>
<div class="t" style="left:1px;top:326.50px;font:7.5px 'Liberation Sans', sans-serif;color:#333;transform:scaleX(0.86);transform-origin:0 0">DTC Client socket (573) | Socket gracefully closed by remote side. | 2018-03-18&nbsp; 20:47:37</div>
<div class="t" style="left:1px;top:337.00px;font:7.5px 'Liberation Sans', sans-serif;color:#333;transform:scaleX(0.86);transform-origin:0 0">DTC Client socket (575) | Close event error. Windows error code 10053: An established connection was aborted. | 2018-03-18&nbsp; 20:47:40</div>
<div class="t" style="left:1px;top:347.50px;font:7.5px 'Liberation Sans', sans-serif;color:#333;transform:scaleX(0.86);transform-origin:0 0">DTC Client socket (575) | Socket gracefully closed by remote side. | 2018-03-18&nbsp; 20:47:40</div>
<div class="t" style="left:1px;top:358.00px;font:7.5px 'Liberation Sans', sans-serif;color:#333;transform:scaleX(0.86);transform-origin:0 0">DTC Client socket (575) | Closed. | 2018-03-18&nbsp; 20:47:40</div>
<div class="t" style="left:1px;top:368.50px;font:7.5px 'Liberation Sans', sans-serif;color:#333;transform:scaleX(0.86);transform-origin:0 0">DTC - Sub Instance | Did not receive Encoding Response from server. Disconnecting. | 2018-03-18&nbsp; 20:47:53</div>
<div class="t" style="left:1px;top:379.00px;font:7.5px 'Liberation Sans', sans-serif;color:#333;transform:scaleX(0.86);transform-origin:0 0">Error connecting to Data or Trading service.&nbsp; For help with this issue, press the &#x27;Send For Analysis&#x27; button on this window.&nbsp; | 2018-03-18&nbsp; 20:47:53</div>
<div class="t" style="left:1px;top:389.50px;font:7.5px 'Liberation Sans', sans-serif;color:#333;transform:scaleX(0.86);transform-origin:0 0">Select &#x27;File &gt;&gt; Disconnect&#x27; to prevent further connection attempts. | 2018-03-18&nbsp; 20:47:53</div>
<div class="t" style="left:1px;top:400.00px;font:7.5px 'Liberation Sans', sans-serif;color:#333;transform:scaleX(0.86);transform-origin:0 0">DTC Client socket (576) | Initiating close of socket by core. | 2018-03-18&nbsp; 20:47:53</div>
<div class="t" style="left:1px;top:410.50px;font:7.5px 'Liberation Sans', sans-serif;color:#333;transform:scaleX(0.86);transform-origin:0 0">DTC Client socket (576) | Shutdown started. Waiting for graceful close. | 2018-03-18&nbsp; 20:47:53</div>
<div class="t" style="left:1px;top:421.00px;font:7.5px 'Liberation Sans', sans-serif;color:#333;transform:scaleX(0.86);transform-origin:0 0">DTC - Sub Instance | Disconnected. | 2018-03-18&nbsp; 20:47:53</div>
<div class="t" style="left:1px;top:431.50px;font:7.5px 'Liberation Sans', sans-serif;color:#333;transform:scaleX(0.86);transform-origin:0 0">Will reconnect to the server in 3.0 seconds. Select &#x27;File &gt;&gt; Disconnect&#x27; to prevent further connection attempts. | 2018-03-18&nbsp; 20:47:53</div>
<div class="t" style="left:1px;top:452.50px;font:7.5px 'Liberation Sans', sans-serif;color:#fff;transform:scaleX(0.86);transform-origin:0 0">DTC - Sub Instance | Connecting to the server 208.78.38.30.&nbsp; Port 4541 | 2018-03-18&nbsp; 20:47:56</div>
<div class="t" style="left:1px;top:463.00px;font:7.5px 'Liberation Sans', sans-serif;color:#fff;transform:scaleX(0.86);transform-origin:0 0">DTC Client socket (578) | Creating socket.&nbsp; Using TLS 1.2. | 2018-03-18&nbsp; 20:47:56</div>
<div class="t" style="left:1px;top:473.50px;font:7.5px 'Liberation Sans', sans-serif;color:#fff;transform:scaleX(0.86);transform-origin:0 0">DTC Client socket (578) | Connecting to IP: 208.78.38.30. | 2018-03-18&nbsp; 20:47:56</div>
<div class="t" style="left:1px;top:484.00px;font:7.5px 'Liberation Sans', sans-serif;color:#fff;transform:scaleX(0.86);transform-origin:0 0">DTC - Sub Instance | Connected to server. | 2018-03-18&nbsp; 20:47:56</div>
<div class="t" style="left:1px;top:494.50px;font:7.5px 'Liberation Sans', sans-serif;color:#fff;transform:scaleX(0.86);transform-origin:0 0">DTC - Sub Instance | Starting socket receive thread. | 2018-03-18&nbsp; 20:47:56</div>
<div class="t" style="left:1px;top:505.00px;font:7.5px 'Liberation Sans', sans-serif;color:#fff;transform:scaleX(0.86);transform-origin:0 0">DTC - Sub Instance | Sending encoding request to server: Binary VLS | 2018-03-18&nbsp; 20:47:56</div>
<div class="t" style="left:1px;top:515.50px;font:7.5px 'Liberation Sans', sans-serif;color:#fff;transform:scaleX(0.86);transform-origin:0 0">DTC Client socket (576) | Close event error. Windows error code 10053: An established connection was aborted. | 2018-03-18&nbsp; 20:48:03</div>
<div class="t" style="left:1px;top:526.00px;font:7.5px 'Liberation Sans', sans-serif;color:#fff;transform:scaleX(0.86);transform-origin:0 0">DTC Client socket (576) | Socket gracefully closed by remote side. | 2018-03-18&nbsp; 20:48:03</div>
<div class="t" style="left:1px;top:536.50px;font:7.5px 'Liberation Sans', sans-serif;color:#fff;transform:scaleX(0.86);transform-origin:0 0">DTC Client socket (576) | Closed. | 2018-03-18&nbsp; 20:48:03</div>
<div class="t" style="left:1px;top:547.00px;font:7.5px 'Liberation Sans', sans-serif;color:#fff;transform:scaleX(0.86);transform-origin:0 0">DTC - Sub Instance | Did not receive Encoding Response from server. Disconnecting. | 2018-03-18&nbsp; 20:48:16</div>
<div class="t" style="left:1px;top:557.50px;font:7.5px 'Liberation Sans', sans-serif;color:#fff;transform:scaleX(0.86);transform-origin:0 0">Error connecting to Data or Trading service.&nbsp; For help with this issue, press the &#x27;Send For Analysis&#x27; button on this window.&nbsp; | 2018-03-18&nbsp; 20:48:16</div>
<div class="t" style="left:1px;top:568.00px;font:7.5px 'Liberation Sans', sans-serif;color:#fff;transform:scaleX(0.86);transform-origin:0 0">Select &#x27;File &gt;&gt; Disconnect&#x27; to prevent further connection attempts. | 2018-03-18&nbsp; 20:48:16</div>
<div class="t" style="left:1px;top:578.50px;font:7.5px 'Liberation Sans', sans-serif;color:#fff;transform:scaleX(0.86);transform-origin:0 0">DTC Client socket (578) | Initiating close of socket by core. | 2018-03-18&nbsp; 20:48:16</div>
<div class="t" style="left:1px;top:589.00px;font:7.5px 'Liberation Sans', sans-serif;color:#fff;transform:scaleX(0.86);transform-origin:0 0">DTC Client socket (578) | Shutdown started. Waiting for graceful close. | 2018-03-18&nbsp; 20:48:16</div>
<div class="t" style="left:1px;top:599.50px;font:7.5px 'Liberation Sans', sans-serif;color:#fff;transform:scaleX(0.86);transform-origin:0 0">DTC - Sub Instance | Disconnected. | 2018-03-18&nbsp; 20:48:16</div>
<div class="t" style="left:1px;top:610.00px;font:7.5px 'Liberation Sans', sans-serif;color:#fff;transform:scaleX(0.86);transform-origin:0 0">Will reconnect to the server in 3.0 seconds. Select &#x27;File &gt;&gt; Disconnect&#x27; to prevent further connection attempts. | 2018-03-18&nbsp; 20:48:16</div>
<div class="t" style="left:1px;top:631.00px;font:7.5px 'Liberation Sans', sans-serif;color:#333;transform:scaleX(0.86);transform-origin:0 0">DTC - Sub Instance | Connecting to the server 208.78.38.30.&nbsp; Port 4541 | 2018-03-18&nbsp; 20:48:19</div>
<div class="t" style="left:1px;top:641.50px;font:7.5px 'Liberation Sans', sans-serif;color:#333;transform:scaleX(0.86);transform-origin:0 0">DTC Client socket (579) | Creating socket.&nbsp; Using TLS 1.2. | 2018-03-18&nbsp; 20:48:19</div>
<div class="t" style="left:1px;top:652.00px;font:7.5px 'Liberation Sans', sans-serif;color:#333;transform:scaleX(0.86);transform-origin:0 0">DTC Client socket (579) | Connecting to IP: 208.78.38.30. | 2018-03-18&nbsp; 20:48:19</div>
<div class="t" style="left:1px;top:662.50px;font:7.5px 'Liberation Sans', sans-serif;color:#333;transform:scaleX(0.86);transform-origin:0 0">DTC - Sub Instance | Connected to server. | 2018-03-18&nbsp; 20:48:19</div>
<div class="t" style="left:1px;top:673.00px;font:7.5px 'Liberation Sans', sans-serif;color:#333;transform:scaleX(0.86);transform-origin:0 0">DTC - Sub Instance | Starting socket receive thread. | 2018-03-18&nbsp; 20:48:19</div>
<div class="t" style="left:1px;top:683.50px;font:7.5px 'Liberation Sans', sans-serif;color:#333;transform:scaleX(0.86);transform-origin:0 0">DTC - Sub Instance | Sending encoding request to server: Binary VLS | 2018-03-18&nbsp; 20:48:19</div>
</div>
<div class="a" style="left:1168px;top:192px;width:17px;height:695px;background:#f0f0f0"></div>
<svg class="a" style="left:1168px;top:192px" width="17" height="20" viewBox="0 0 17 20"><path d="M5 11L8.5 7.5L12 11" stroke="#606060" stroke-width="1.6" fill="none"/></svg>
<div class="a" style="left:1169px;top:852px;width:15px;height:17px;background:#cdcdcd"></div>
<svg class="a" style="left:1168px;top:869px" width="17" height="18" viewBox="0 0 17 18"><path d="M5 7L8.5 10.5L12 7" stroke="#606060" stroke-width="1.6" fill="none"/></svg>
<div class="a" style="left:233px;top:887px;width:952px;height:17px;background:#f0f0f0"></div>
<svg class="a" style="left:233px;top:887px" width="17" height="17" viewBox="0 0 17 17"><path d="M10 5L6.5 8.5L10 12" stroke="#606060" stroke-width="1.6" fill="none"/></svg>
<div class="a" style="left:249px;top:888px;width:756px;height:15px;background:#cdcdcd"></div>
<svg class="a" style="left:1150px;top:887px" width="17" height="17" viewBox="0 0 17 17"><path d="M7 5L10.5 8.5L7 12" stroke="#606060" stroke-width="1.6" fill="none"/></svg>
<div class="a" style="left:505px;top:210px;width:726px;height:527px;background:#f0f0f0;border:1px solid #1c88d8;box-shadow:0 2px 10px 1px rgba(0,0,0,0.2)"></div>
<div class="a" style="left:506px;top:211px;width:724px;height:28px;background:#fff"></div>
<div class="t" style="left:513px;top:217px;font:13px 'Liberation Sans', sans-serif;color:#000;transform:scaleX(0.9);transform-origin:0 0;">Data/Trade Service Settings</div>
<svg class="a" style="left:1203px;top:214px" width="20" height="20" viewBox="0 0 20 20"><path d="M5 5L15 15M15 5L5 15" stroke="#111" stroke-width="1.1"/></svg>
<div class="t" style="left:304px;top:249px;width:300px;text-align:right;font:13.5px 'Liberation Sans', sans-serif;color:#000">Service:</div>
<div class="a" style="left:614px;top:247px;width:289px;height:19px;background:#fff;border-top:1px solid #a0a0a0;border-left:1px solid #a0a0a0"></div>
<div class="a" style="left:886px;top:248px;width:17px;height:18px;background:#f0f0f0;border-right:1px solid #a0a0a0;border-bottom:1px solid #a0a0a0"></div>
<svg class="a" style="left:886px;top:247px" width="17" height="19" viewBox="0 0 17 19"><path d="M4 7.5H12L8 12.0Z" fill="#000"/></svg>
<div class="t" style="left:616px;top:249px;font:13.5px 'Liberation Sans', sans-serif;color:#000;">DTC - Sub Instance&nbsp;&nbsp;&nbsp; [trading]</div>
<div class="a" style="left:520px;top:276px;width:383px;height:279px;background:#fff;border-top:1px solid #a0a0a0;border-left:1px solid #a0a0a0"></div>
<div class="a" style="left:521px;top:277px;width:382px;height:17px;background:#f0f0f0;border-bottom:1px solid #d5d5d5"></div>
<div class="a" style="left:630px;top:277px;width:1px;height:17px;background:#d5d5d5"></div>
<div class="a" style="left:787px;top:277px;width:1px;height:17px;background:#d5d5d5"></div>
<svg class="a" style="left:521px;top:294px" width="382" height="261" viewBox="0 0 382 261"><path d="M0 16.6H382" stroke="#f0f0f0" stroke-width="1"/><path d="M0 32.7H382" stroke="#f0f0f0" stroke-width="1"/><path d="M0 48.8H382" stroke="#f0f0f0" stroke-width="1"/><path d="M0 64.9H382" stroke="#f0f0f0" stroke-width="1"/><path d="M0 81.0H382" stroke="#f0f0f0" stroke-width="1"/><path d="M0 97.1H382" stroke="#f0f0f0" stroke-width="1"/><path d="M0 113.2H382" stroke="#f0f0f0" stroke-width="1"/><path d="M0 129.3H382" stroke="#f0f0f0" stroke-width="1"/><path d="M0 145.4H382" stroke="#f0f0f0" stroke-width="1"/><path d="M0 161.5H382" stroke="#f0f0f0" stroke-width="1"/><path d="M0 177.6H382" stroke="#f0f0f0" stroke-width="1"/><path d="M0 193.7H382" stroke="#f0f0f0" stroke-width="1"/><path d="M0 209.8H382" stroke="#f0f0f0" stroke-width="1"/><path d="M0 225.9H382" stroke="#f0f0f0" stroke-width="1"/><path d="M0 242.0H382" stroke="#f0f0f0" stroke-width="1"/><path d="M0 258.1H382" stroke="#f0f0f0" stroke-width="1"/><path d="M109.5 0V261M266.5 0V261" stroke="#f0f0f0" stroke-width="1"/></svg>
<div class="t" style="left:524px;top:278px;font:13.5px 'Liberation Sans', sans-serif;color:#000;">Service Setting</div>
<div class="t" style="left:635px;top:278px;font:13.5px 'Liberation Sans', sans-serif;color:#000;">Value</div>
<div class="t" style="left:523px;top:296px;font:13.5px 'Liberation Sans', sans-serif;color:#000;">Server Address:</div>
<div class="t" style="left:634px;top:296px;font:13.5px 'Liberation Sans', sans-serif;color:#000;">208.78.38.30:4541</div>
<div class="t" style="left:523px;top:312px;font:13.5px 'Liberation Sans', sans-serif;color:#000;">Server Port:</div>
<div class="t" style="left:634px;top:312px;font:13.5px 'Liberation Sans', sans-serif;color:#000;">11099</div>
<div class="t" style="left:523px;top:328px;font:13.5px 'Liberation Sans', sans-serif;color:#000;">Historical Data ...</div>
<div class="t" style="left:634px;top:328px;font:13.5px 'Liberation Sans', sans-serif;color:#000;">11098</div>
<div class="t" style="left:523px;top:344px;font:13.5px 'Liberation Sans', sans-serif;color:#000;">Use Sierra Cha...</div>
<div class="t" style="left:634px;top:344px;font:13.5px 'Liberation Sans', sans-serif;color:#000;">False</div>
<div class="t" style="left:523px;top:360px;font:13.5px 'Liberation Sans', sans-serif;color:#000;">Username:</div>
<div class="t" style="left:523px;top:376px;font:13.5px 'Liberation Sans', sans-serif;color:#000;">Password:</div>
<div class="t" style="left:523px;top:392px;font:13.5px 'Liberation Sans', sans-serif;color:#000;">Use TLS:</div>
<div class="t" style="left:634px;top:392px;font:13.5px 'Liberation Sans', sans-serif;color:#000;">True</div>
<div class="a" style="left:520px;top:564px;width:383px;height:44px;border:1px solid #d0d0d0;box-shadow:inset 1px 1px 0 #fff, 1px 1px 0 #fff"></div>
<div class="t" style="left:536px;top:574px;font:13.5px 'Liberation Sans', sans-serif;color:#000;">Select an input in the list above</div>
<div class="a" style="left:520px;top:616px;width:383px;height:63px;border:1px solid #d0d0d0;box-shadow:inset 1px 1px 0 #fff, 1px 1px 0 #fff"></div>
<div class="t" style="left:524px;top:609px;font:13.5px 'Liberation Sans', sans-serif;color:#000;background:#f0f0f0;padding:0 2px">Saved DTS Configuration</div>
<div class="t" style="left:532px;top:631px;font:13.5px 'Liberation Sans', sans-serif;color:#000;">DTS Config:</div>
<div class="a" style="left:614px;top:628px;width:283px;height:19px;background:#fff;border-top:1px solid #a0a0a0;border-left:1px solid #a0a0a0"></div>
<div class="a" style="left:880px;top:629px;width:17px;height:18px;background:#f0f0f0;border-right:1px solid #a0a0a0;border-bottom:1px solid #a0a0a0"></div>
<svg class="a" style="left:880px;top:628px" width="17" height="19" viewBox="0 0 17 19"><path d="M4 7.5H12L8 12.0Z" fill="#000"/></svg>
<div class="a" style="left:612px;top:653px;width:68px;height:24px;background:#f0f0f0;border-top:1px solid #e0e0e0;border-left:1px solid #e0e0e0;border-right:1px solid #a0a0a0;border-bottom:2px solid #a0a0a0"></div>
<div class="t" style="left:612px;top:657px;width:68px;text-align:center;font:13.5px 'Liberation Sans', sans-serif;color:#a0a0a0">Load</div>
<div class="a" style="left:694px;top:653px;width:68px;height:24px;background:#f0f0f0;border-top:1px solid #e0e0e0;border-left:1px solid #e0e0e0;border-right:1px solid #a0a0a0;border-bottom:2px solid #a0a0a0"></div>
<div class="t" style="left:694px;top:657px;width:68px;text-align:center;font:13.5px 'Liberation Sans', sans-serif;color:#a0a0a0">Save</div>
<div class="a" style="left:776px;top:653px;width:68px;height:24px;background:#f0f0f0;border-top:1px solid #e0e0e0;border-left:1px solid #e0e0e0;border-right:1px solid #a0a0a0;border-bottom:2px solid #a0a0a0"></div>
<div class="t" style="left:776px;top:657px;width:68px;text-align:center;font:13.5px 'Liberation Sans', sans-serif;color:#a0a0a0">Delete</div>
<div class="a" style="left:520px;top:697px;width:100px;height:27px;background:#f0f0f0;border-top:1px solid #a8a8a8;border-left:1px solid #a8a8a8;border-right:1px solid #646464;border-bottom:1px solid #646464;box-shadow:inset 1px 1px 0 #fff, inset -1px -1px 0 #a0a0a0"></div>
<div class="t" style="left:520px;top:703px;width:100px;text-align:center;font:13.5px 'Liberation Sans', sans-serif;color:#000">OK</div>
<div class="a" style="left:632px;top:697px;width:100px;height:27px;background:#f0f0f0;border-top:1px solid #a8a8a8;border-left:1px solid #a8a8a8;border-right:1px solid #646464;border-bottom:1px solid #646464;box-shadow:inset 1px 1px 0 #fff, inset -1px -1px 0 #a0a0a0"></div>
<div class="t" style="left:632px;top:703px;width:100px;text-align:center;font:13.5px 'Liberation Sans', sans-serif;color:#000">Cancel</div>
<div class="a" style="left:744px;top:697px;width:100px;height:27px;background:#f0f0f0;border-top:1px solid #a8a8a8;border-left:1px solid #a8a8a8;border-right:1px solid #646464;border-bottom:1px solid #646464;box-shadow:inset 1px 1px 0 #fff, inset -1px -1px 0 #a0a0a0"></div>
<div class="t" style="left:744px;top:703px;width:100px;text-align:center;font:13.5px 'Liberation Sans', sans-serif;color:#000">Help</div>
<div class="a" style="left:916px;top:248px;width:12px;height:12px;background:#fff;border-top:1px solid #808080;border-left:1px solid #808080;border-right:1px solid #f0f0f0;border-bottom:1px solid #f0f0f0"></div>
<svg class="a" style="left:916px;top:248px" width="12" height="12" viewBox="0 0 12 12"><path d="M3 6L5 8.5L9 3.5" stroke="#000" stroke-width="1.6" fill="none"/></svg>
<div class="t" style="left:933px;top:247px;font:13.5px 'Liberation Sans', sans-serif;color:#000;">Connect on Program Startup</div>
<div class="a" style="left:916px;top:268px;width:12px;height:12px;background:#fff;border-top:1px solid #808080;border-left:1px solid #808080;border-right:1px solid #f0f0f0;border-bottom:1px solid #f0f0f0"></div>
<svg class="a" style="left:916px;top:268px" width="12" height="12" viewBox="0 0 12 12"><path d="M3 6L5 8.5L9 3.5" stroke="#000" stroke-width="1.6" fill="none"/></svg>
<div class="t" style="left:933px;top:267px;font:13.5px 'Liberation Sans', sans-serif;color:#000;">Reconnect on Failure</div>
<div class="t" style="left:916px;top:319px;font:13.5px 'Liberation Sans', sans-serif;color:#000;">Time Zone:</div>
<div class="a" style="left:932px;top:338px;width:263px;height:18px;background:#fff;border-top:1px solid #a0a0a0;border-left:1px solid #a0a0a0"></div>
<div class="a" style="left:1178px;top:339px;width:17px;height:17px;background:#f0f0f0;border-right:1px solid #a0a0a0;border-bottom:1px solid #a0a0a0"></div>
<svg class="a" style="left:1178px;top:338px" width="17" height="18" viewBox="0 0 17 18"><path d="M4 7.0H12L8 11.5Z" fill="#000"/></svg>
<div class="t" style="left:934px;top:340px;font:13.5px 'Liberation Sans', sans-serif;color:#000;">Los Angeles (-8 PST/-7 PDT)</div>
<div class="t" style="left:916px;top:370px;font:13.5px 'Liberation Sans', sans-serif;color:#000;">Intraday Data Storage Time Unit:</div>
<div class="a" style="left:932px;top:388px;width:263px;height:18px;background:#fff;border-top:1px solid #a0a0a0;border-left:1px solid #a0a0a0"></div>
<div class="a" style="left:1178px;top:389px;width:17px;height:17px;background:#f0f0f0;border-right:1px solid #a0a0a0;border-bottom:1px solid #a0a0a0"></div>
<svg class="a" style="left:1178px;top:388px" width="17" height="18" viewBox="0 0 17 18"><path d="M4 7.0H12L8 11.5Z" fill="#000"/></svg>
<div class="t" style="left:934px;top:390px;font:13.5px 'Liberation Sans', sans-serif;color:#000;">1 Tick</div>
<div class="t" style="left:916px;top:420px;font:13.5px 'Liberation Sans', sans-serif;color:#000;">Number Of Stored Time And Sales Records:</div>
<div class="a" style="left:932px;top:438px;width:123px;height:22px;background:#fff;border-top:1px solid #a0a0a0;border-left:1px solid #a0a0a0"></div>
<div class="t" style="left:933px;top:440px;font:13.5px 'Liberation Sans', sans-serif;color:#000;">4000</div>
<div class="a" style="left:1039px;top:439px;width:16px;height:21px;background:#f0f0f0;border-right:1px solid #a0a0a0;border-bottom:1px solid #a0a0a0"></div>
<svg class="a" style="left:1039px;top:438px" width="16" height="22" viewBox="0 0 16 22"><path d="M1 11.0H15" stroke="#a0a0a0"/><path d="M6 8.0H10L8 5.5Z M6 14.0H10L8 16.5Z" fill="#000"/></svg>
<div class="a" style="left:916px;top:477px;width:279px;height:71px;border:1px solid #d0d0d0;box-shadow:inset 1px 1px 0 #fff, 1px 1px 0 #fff"></div>
<div class="t" style="left:919px;top:470px;font:13.5px 'Liberation Sans', sans-serif;color:#000;background:#f0f0f0;padding:0 2px">Max Historical Intraday Days To Download</div>
<div class="t" style="left:744px;top:497px;width:300px;text-align:right;font:13.5px 'Liberation Sans', sans-serif;color:#000">Non-Tick Data:</div>
<div class="a" style="left:1056px;top:493px;width:123px;height:22px;background:#fff;border-top:1px solid #a0a0a0;border-left:1px solid #a0a0a0"></div>
<div class="t" style="left:1057px;top:496px;font:13.5px 'Liberation Sans', sans-serif;color:#000;">186</div>
<div class="a" style="left:1163px;top:494px;width:16px;height:21px;background:#f0f0f0;border-right:1px solid #a0a0a0;border-bottom:1px solid #a0a0a0"></div>
<svg class="a" style="left:1163px;top:493px" width="16" height="22" viewBox="0 0 16 22"><path d="M1 11.0H15" stroke="#a0a0a0"/><path d="M6 8.0H10L8 5.5Z M6 14.0H10L8 16.5Z" fill="#000"/></svg>
<div class="t" style="left:744px;top:524px;width:300px;text-align:right;font:13.5px 'Liberation Sans', sans-serif;color:#000">1-Tick Data:</div>
<div class="a" style="left:1056px;top:520px;width:123px;height:22px;background:#fff;border-top:1px solid #a0a0a0;border-left:1px solid #a0a0a0"></div>
<div class="t" style="left:1057px;top:522px;font:13.5px 'Liberation Sans', sans-serif;color:#000;">186</div>
<div class="a" style="left:1163px;top:521px;width:16px;height:21px;background:#f0f0f0;border-right:1px solid #a0a0a0;border-bottom:1px solid #a0a0a0"></div>
<svg class="a" style="left:1163px;top:520px" width="16" height="22" viewBox="0 0 16 22"><path d="M1 11.0H15" stroke="#a0a0a0"/><path d="M6 8.0H10L8 5.5Z M6 14.0H10L8 16.5Z" fill="#000"/></svg>
<div class="a" style="left:916px;top:558px;width:12px;height:12px;background:#fff;border-top:1px solid #808080;border-left:1px solid #808080;border-right:1px solid #f0f0f0;border-bottom:1px solid #f0f0f0"></div>
<div class="t" style="left:933px;top:557px;font:13.5px 'Liberation Sans', sans-serif;color:#000;">Enable FIX Logging</div>
<div class="a" style="left:916px;top:577px;width:12px;height:12px;background:#fff;border-top:1px solid #808080;border-left:1px solid #808080;border-right:1px solid #f0f0f0;border-bottom:1px solid #f0f0f0"></div>
<svg class="a" style="left:916px;top:577px" width="12" height="12" viewBox="0 0 12 12"><path d="M3 6L5 8.5L9 3.5" stroke="#000" stroke-width="1.6" fill="none"/></svg>
<div class="t" style="left:933px;top:576px;font:13.5px 'Liberation Sans', sans-serif;color:#000;">Allow Support for Sierra Chart Data Feeds</div>
<div class="a" style="left:916px;top:597px;width:12px;height:12px;background:#fff;border-top:1px solid #808080;border-left:1px solid #808080;border-right:1px solid #f0f0f0;border-bottom:1px solid #f0f0f0"></div>
<div class="t" style="left:933px;top:596px;font:13.5px 'Liberation Sans', sans-serif;color:#000;">Support Alternate Forex Historical Data</div>
<div class="a" style="left:916px;top:616px;width:12px;height:12px;background:#fff;border-top:1px solid #808080;border-left:1px solid #808080;border-right:1px solid #f0f0f0;border-bottom:1px solid #f0f0f0"></div>
<div class="t" style="left:933px;top:615px;font:13.5px 'Liberation Sans', sans-serif;color:#000;">Download Dividend Adjusted Historical Data</div>
<div class="a" style="left:916px;top:636px;width:12px;height:12px;background:#fff;border-top:1px solid #808080;border-left:1px solid #808080;border-right:1px solid #f0f0f0;border-bottom:1px solid #f0f0f0"></div>
<div class="t" style="left:933px;top:635px;font:13.5px 'Liberation Sans', sans-serif;color:#000;">Show Passwords</div>
<div class="a" style="left:916px;top:653px;width:198px;height:27px;background:#f0f0f0;border-top:1px solid #a8a8a8;border-left:1px solid #a8a8a8;border-right:1px solid #646464;border-bottom:1px solid #646464;box-shadow:inset 1px 1px 0 #fff, inset -1px -1px 0 #a0a0a0"></div>
<div class="t" style="left:916px;top:659px;width:198px;text-align:center;font:13.5px 'Liberation Sans', sans-serif;color:#000">Data File Management</div>
<div class="a" style="left:1118px;top:653px;width:98px;height:27px;background:#f0f0f0;border-top:1px solid #a8a8a8;border-left:1px solid #a8a8a8;border-right:1px solid #646464;border-bottom:1px solid #646464;box-shadow:inset 1px 1px 0 #fff, inset -1px -1px 0 #a0a0a0"></div>
<div class="t" style="left:1118px;top:659px;width:98px;text-align:center;font:13.5px 'Liberation Sans', sans-serif;color:#000">Advanced</div>
<div class="a" style="left:916px;top:698px;width:198px;height:27px;background:#f0f0f0;border-top:1px solid #a8a8a8;border-left:1px solid #a8a8a8;border-right:1px solid #646464;border-bottom:1px solid #646464;box-shadow:inset 1px 1px 0 #fff, inset -1px -1px 0 #a0a0a0"></div>
<div class="t" style="left:916px;top:704px;width:198px;text-align:center;font:13.5px 'Liberation Sans', sans-serif;color:#000">SC Server Settings</div>
<div class="a" style="left:1118px;top:698px;width:98px;height:27px;background:#f0f0f0;border-top:1px solid #a8a8a8;border-left:1px solid #a8a8a8;border-right:1px solid #646464;border-bottom:1px solid #646464;box-shadow:inset 1px 1px 0 #fff, inset -1px -1px 0 #a0a0a0"></div>
<div class="t" style="left:1118px;top:704px;width:98px;text-align:center;font:13.5px 'Liberation Sans', sans-serif;color:#000">Proxy Settings</div>
</body></html>
